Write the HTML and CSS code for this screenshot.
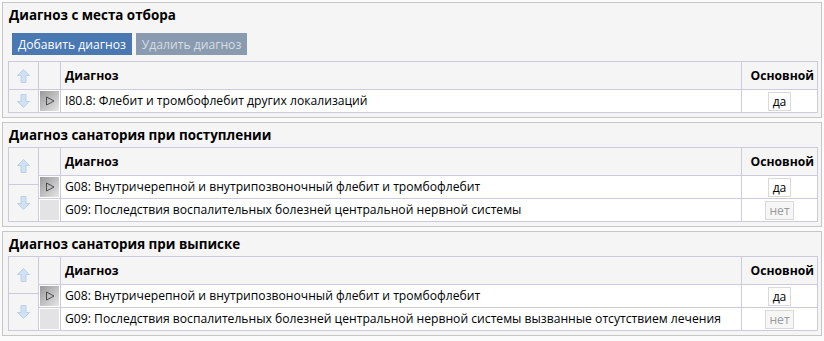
FILE: index.html
```html
<!DOCTYPE html>
<html lang="ru">

<head>
    <meta charset="UTF-8">
    <title>Диагнозы</title>
    <link rel="stylesheet" href="styles.css">
</head>

<body>
    <div class="panel">
        <div class="panel-title">Диагноз с места отбора</div>
        <div class="toolbar">
            <button class="btn btn-primary">Добавить диагноз</button>
            <button class="btn btn-disabled">Удалить диагноз</button>
        </div>
        <div class="grid">
            <div class="arrows arrows-rows">
                <div class="arrow"><svg width="13" height="14" viewBox="0 0 13 14"><path d="M6.5 0.5 L12.5 6.5 H9 V13.5 H4 V6.5 H0.5 Z" fill="#cfe1f3" stroke="#b9d1ea"/></svg></div>
                <div class="arrow"><svg width="13" height="14" viewBox="0 0 13 14"><path d="M6.5 13.5 L12.5 7.5 H9 V0.5 H4 V7.5 H0.5 Z" fill="#cfe1f3" stroke="#b9d1ea"/></svg></div>
            </div>
            <table class="table">
                <tr>
                    <th class="col-mark"></th>
                    <th class="col-name">Диагноз</th>
                    <th class="col-main">Основной</th>
                </tr>
                <tr>
                    <td class="col-mark"><span class="mark mark-current"><svg width="10" height="10" viewBox="0 0 10 10"><path d="M1.5 1 L9 5 L1.5 9 Z" fill="none" stroke="#4a4a4a"/></svg></span></td>
                    <td class="col-name">I80.8: Флебит и тромбофлебит других локализаций</td>
                    <td class="col-main"><span class="flag">да</span></td>
                </tr>
            </table>
        </div>
    </div>

    <div class="panel">
        <div class="panel-title">Диагноз санатория при поступлении</div>
        <div class="grid">
            <div class="arrows">
                <div class="arrow"><svg width="13" height="14" viewBox="0 0 13 14"><path d="M6.5 0.5 L12.5 6.5 H9 V13.5 H4 V6.5 H0.5 Z" fill="#cfe1f3" stroke="#b9d1ea"/></svg></div>
                <div class="arrow"><svg width="13" height="14" viewBox="0 0 13 14"><path d="M6.5 13.5 L12.5 7.5 H9 V0.5 H4 V7.5 H0.5 Z" fill="#cfe1f3" stroke="#b9d1ea"/></svg></div>
            </div>
            <table class="table">
                <tr>
                    <th class="col-mark"></th>
                    <th class="col-name">Диагноз</th>
                    <th class="col-main">Основной</th>
                </tr>
                <tr>
                    <td class="col-mark"><span class="mark mark-current"><svg width="10" height="10" viewBox="0 0 10 10"><path d="M1.5 1 L9 5 L1.5 9 Z" fill="none" stroke="#4a4a4a"/></svg></span></td>
                    <td class="col-name">G08: Внутричерепной и внутрипозвоночный флебит и тромбофлебит</td>
                    <td class="col-main"><span class="flag">да</span></td>
                </tr>
                <tr>
                    <td class="col-mark"><span class="mark"></span></td>
                    <td class="col-name">G09: Последствия воспалительных болезней центральной нервной системы</td>
                    <td class="col-main"><span class="flag flag-off">нет</span></td>
                </tr>
            </table>
        </div>
    </div>

    <div class="panel">
        <div class="panel-title">Диагноз санатория при выписке</div>
        <div class="grid">
            <div class="arrows">
                <div class="arrow"><svg width="13" height="14" viewBox="0 0 13 14"><path d="M6.5 0.5 L12.5 6.5 H9 V13.5 H4 V6.5 H0.5 Z" fill="#cfe1f3" stroke="#b9d1ea"/></svg></div>
                <div class="arrow"><svg width="13" height="14" viewBox="0 0 13 14"><path d="M6.5 13.5 L12.5 7.5 H9 V0.5 H4 V7.5 H0.5 Z" fill="#cfe1f3" stroke="#b9d1ea"/></svg></div>
            </div>
            <table class="table">
                <tr>
                    <th class="col-mark"></th>
                    <th class="col-name">Диагноз</th>
                    <th class="col-main">Основной</th>
                </tr>
                <tr>
                    <td class="col-mark"><span class="mark mark-current"><svg width="10" height="10" viewBox="0 0 10 10"><path d="M1.5 1 L9 5 L1.5 9 Z" fill="none" stroke="#4a4a4a"/></svg></span></td>
                    <td class="col-name">G08: Внутричерепной и внутрипозвоночный флебит и тромбофлебит</td>
                    <td class="col-main"><span class="flag">да</span></td>
                </tr>
                <tr>
                    <td class="col-mark"><span class="mark"></span></td>
                    <td class="col-name">G09: Последствия воспалительных болезней центральной нервной системы вызванные отсутствием лечения</td>
                    <td class="col-main"><span class="flag flag-off">нет</span></td>
                </tr>
            </table>
        </div>
    </div>
</body>

</html>
```

FILE: styles.css
```css
body {
    font-family: "Open Sans", "Noto Sans", sans-serif;
    font-size: 12.15px;
    line-height: 16px;
    color: #000;
    margin: 0;
    padding: 2px 0 0 0;
    background: #fbfbfb;
}

.panel {
    margin: 0 2px 4px 2px;
    padding: 3px 3px 4px 5px;
    border: 1px solid #c6c6c6;
    background-color: #f5f5f5;
}

.panel-title {
    font-size: 13.4px;
    font-weight: bold;
    line-height: 18px;
    padding-left: 1px;
    margin-bottom: 3px;
}

.toolbar {
    display: flex;
    gap: 4px;
    padding-left: 4px;
    margin: 9px 0 6px 0;
}

.btn {
    font-family: inherit;
    font-size: 12.15px;
    height: 22px;
    padding: 0 6px;
    border: none;
    border-radius: 0;
}

.btn-primary {
    background-color: #4a78b3;
    color: #ffffff;
}

.btn-disabled {
    background-color: #8a9bb0;
    color: #d6dde6;
}

.grid {
    display: flex;
    border: 1px solid #cbcbdd;
}

.arrows {
    width: 29px;
    display: flex;
    flex-direction: column;
    border-right: 1px solid #cbcbdd;
    background-color: #f5f5f5;
}

.arrow {
    flex: 1;
    display: flex;
    align-items: center;
    justify-content: center;
}

.arrow + .arrow {
    border-top: 1px solid #cbcbdd;
}

.arrows-rows .arrow:first-child {
    flex: 0 0 27px;
}

.table {
    flex: 1;
    border-collapse: collapse;
}

.table th, .table td {
    padding: 0;
    border: 1px solid #cbcbdd;
}

.table tr:first-child th {
    border-top: none;
}

.table th:first-child, .table td:first-child {
    border-left: none;
}

.table th:last-child, .table td:last-child {
    border-right: none;
}

.table tr:last-child td {
    border-bottom: none;
}

.table th {
    height: 27px;
    background-color: #f5f5f5;
    font-weight: bold;
    text-align: left;
}

.table td {
    height: 22px;
    background-color: #ffffff;
}

.col-mark {
    width: 21px;
}

.table td.col-mark {
    background-color: #f5f5f5;
}

.table th.col-name, .table td.col-name {
    padding-left: 4px;
}

.col-main {
    width: 72px;
    text-align: center;
}

.table th.col-main {
    text-align: right;
    padding-right: 3px;
}

.mark {
    display: flex;
    align-items: center;
    justify-content: center;
    width: 19px;
    height: 20px;
    border: 1px solid #ffffff;
    background-color: #e3e3e3;
}

.mark-current {
    background: linear-gradient(135deg, #999999, #e6e6e6);
}

.flag {
    display: inline-block;
    vertical-align: middle;
    min-width: 15px;
    height: 17px;
    line-height: 17px;
    padding: 0 3px;
    border: 1px solid #d9d9d9;
    background-color: #ffffff;
}

.flag-off {
    color: #9a9a9a;
    background-color: #f6f6f6;
}
```
